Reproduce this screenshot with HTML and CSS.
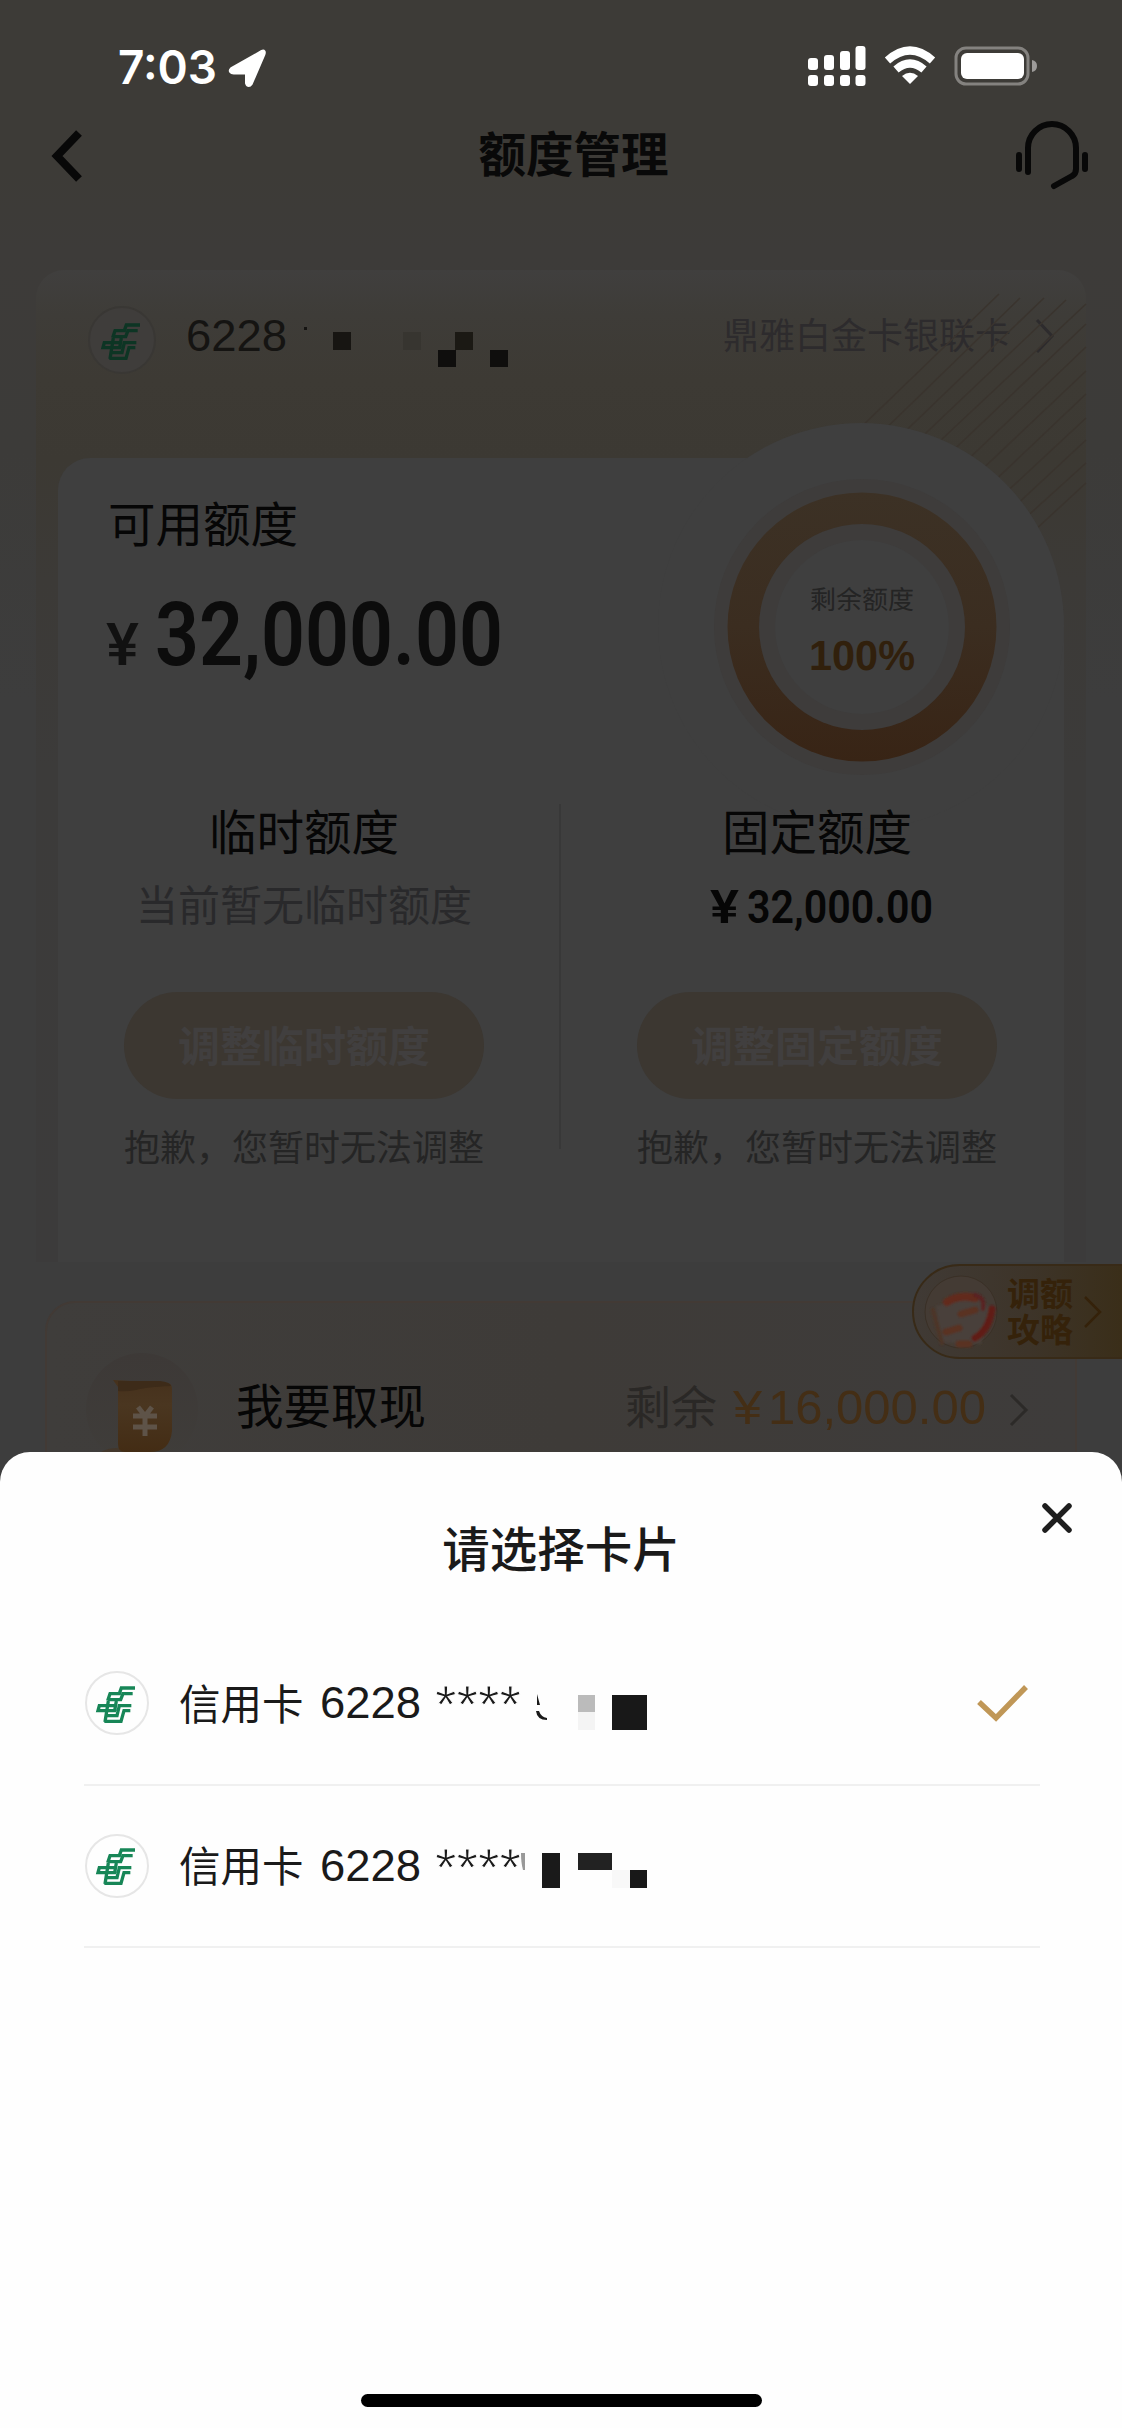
FILE: index.html
```html
<!DOCTYPE html>
<html lang="zh-CN">
<head>
<meta charset="utf-8">
<title>额度管理</title>
<link rel="stylesheet" href="styles.css">
</head>
<body>
<svg class="defs" width="0" height="0" aria-hidden="true">
  <symbol id="bank" viewBox="0 0 225 225">
    <g fill="none" stroke="currentColor" stroke-width="10" transform="translate(5 -2)">
      <path d="M160 68H119L113 85H82M153 85H124L117 103H80M86 82L78 106"/>
      <path d="M105 121H53L49 136H103M80 107L70 170M149 121H113L106 151H76M146 136H127L118 168H68M104 107L99 136"/>
    </g>
  </symbol>
</svg>
<main class="phone">
  <header class="status">
    <svg width="1122" height="100" viewBox="0 0 1122 100">
      <text class="clock" x="118" y="84" textLength="99" lengthAdjust="spacingAndGlyphs">7:03</text>
      <path class="white" stroke="#fff" stroke-width="5" stroke-linejoin="round" d="M232 69.500L262 52.500Q264 51 263 54L250.500 83Q248.500 86 247.500 83V72H234Q230 71.500 232 69.500Z"/>
      <g class="white">
        <rect x="808" y="58" width="10" height="12" rx="3"/><rect x="824" y="55" width="10" height="15" rx="3"/><rect x="840" y="51" width="10" height="19" rx="3"/><rect x="855.500" y="46" width="10" height="24" rx="3"/>
        <rect x="808" y="75" width="10" height="11" rx="3"/><rect x="824" y="75" width="10" height="11" rx="3"/><rect x="840" y="75" width="10" height="11" rx="3"/><rect x="855.500" y="75" width="10" height="11" rx="3"/>
        <path d="M910 84L902 76Q910 69.500 918 76Z"/>
      </g>
      <path class="wifi" d="M887.500 60.500Q910 40.500 932.500 60.500M896 69.500Q910 57.500 924 69.500"/>
      <rect x="956" y="48" width="72" height="36" rx="10" fill="none" stroke="#84827f" stroke-width="3"/>
      <rect x="961" y="53" width="63" height="26" rx="6" fill="#fff"/>
      <path d="M1032 60Q1037 61 1037 66T1032 72Z" fill="#9d9b99"/>
    </svg>
  </header>
  <nav class="nav">
    <svg class="back" width="36" height="54" viewBox="0 0 36 54"><path d="M31 4L9 27L31 50"/></svg>
    <h1>额度管理</h1>
    <svg class="service" width="76" height="72" viewBox="0 0 76 72"><path d="M15 52V28A24 24 0 0 1 63 28V49Q63 54 59 56L41 66M6 35V49M72 35V49"/></svg>
  </nav>

  <section class="outer">
    <svg class="lines" width="232" height="270" viewBox="0 0 232 270">
      <path d="M0 164L145 24M18 172L166 28M36 176L190 28M53 181L212 30M70 186L232 34M87 192L232 54M104 199L232 77M119 208L232 101M132 219L232 124M145 229L232 148M157 240L232 170M168 251L232 193M180 261L232 213"/>
    </svg>
    <div class="card-head">
      <span class="logo dim"><svg width="75" height="75"><use href="#bank"/></svg></span>
      <svg class="number" width="330" height="66" viewBox="0 0 330 66">
        <text class="digits" x="-2" y="45" textLength="101" lengthAdjust="spacingAndGlyphs">6228</text>
        <rect x="116" y="21" width="3" height="3"/>
        <rect x="145" y="26" width="18" height="18" fill="#171512"/><rect x="215" y="26" width="18" height="18" fill="#373530"/><rect x="267" y="26" width="18" height="18" fill="#1b1914"/><rect x="250" y="44" width="18" height="17" fill="#0f0e0d"/><rect x="302" y="44" width="18" height="17" fill="#0f0e0d"/>
      </svg>
      <span class="card-name">鼎雅白金卡银联卡</span>
      <svg class="chev" width="20" height="36" viewBox="0 0 20 36"><path d="M2 2L17 18L2 34"/></svg>
    </div>
    <div class="inner">
      <div class="bump"></div>
      <div class="available">
        <div>
          <h2>可用额度</h2>
          <svg class="amount" width="410" height="90" viewBox="0 0 410 90">
            <text class="yen" x="-1" y="75" textLength="33" lengthAdjust="spacingAndGlyphs">¥</text>
            <text class="big" x="48" y="75" textLength="348" lengthAdjust="spacingAndGlyphs">32,000.00</text>
          </svg>
        </div>
        <svg class="ring" width="298" height="298" viewBox="-149 -149 298 298">
          <defs><linearGradient id="gold" x1="0" y1="0" x2="0" y2="1"><stop offset="0" stop-color="#3c3125"/><stop offset=".5" stop-color="#3b2d20"/><stop offset="1" stop-color="#382415"/></linearGradient></defs>
          <circle r="148" fill="#3e3c3b"/>
          <circle r="134.500" fill="url(#gold)"/>
          <circle r="103" fill="#3e3c3b"/>
          <circle r="87" fill="#3f3f3f"/>
          <text class="ring-label" y="-18">剩余额度</text>
          <text class="ring-value" x="-53" y="43" textLength="106" lengthAdjust="spacingAndGlyphs">100%</text>
        </svg>
      </div>
      <div class="limits">
        <div class="limit">
          <h2>临时额度</h2>
          <p class="none">当前暂无临时额度</p>
          <button>调整临时额度</button>
          <p class="sorry">抱歉，您暂时无法调整</p>
        </div>
        <div class="limit">
          <h2>固定额度</h2>
          <svg class="fixed" width="230" height="58" viewBox="0 0 230 58">
            <text class="mid" x="8" y="46" textLength="29" lengthAdjust="spacingAndGlyphs">¥</text>
            <text class="mid" x="45" y="46" textLength="186" lengthAdjust="spacingAndGlyphs">32,000.00</text>
          </svg>
          <button>调整固定额度</button>
          <p class="sorry">抱歉，您暂时无法调整</p>
        </div>
      </div>
    </div>
  </section>

  <section class="cash">
    <svg class="wallet" width="112" height="112" viewBox="0 0 112 112">
      <defs><linearGradient id="purse" x1="0" y1="0" x2="0" y2="1"><stop offset="0" stop-color="#46311c"/><stop offset=".35" stop-color="#4a3620"/><stop offset="1" stop-color="#432c14"/></linearGradient>
      <linearGradient id="halo" x1="0" y1="0" x2="0" y2="1"><stop offset="0" stop-color="#3d3937"/><stop offset="1" stop-color="#3f3d3a"/></linearGradient></defs>
      <circle cx="56" cy="56" r="56" fill="url(#halo)"/>
      <ellipse cx="30" cy="104" rx="18" ry="9" fill="#43372b"/>
      <path d="M27 27L81 30Q86 30 86 36V78Q84 99 64 99H39Q32 99 32 91V34Z" fill="url(#purse)"/>
      <path d="M32 28H74Q84 29 85 33Q60 34 50 37Q40 39 32 38Z" fill="#3d2b19"/>
      <path d="M52 54L59 63L66 54M47 63H71M47 74H71M59 62V83" fill="none" stroke="#5e5348" stroke-width="5"/>
    </svg>
    <h2>我要取现</h2>
    <span class="left">剩余</span>
    <svg class="cash-amount" width="262" height="60" viewBox="0 0 262 60">
      <text x="1" y="47" textLength="29" lengthAdjust="spacingAndGlyphs">¥</text>
      <text x="36" y="47" textLength="218" lengthAdjust="spacingAndGlyphs">16,000.00</text>
    </svg>
    <svg class="chev small" width="20" height="34" viewBox="0 0 20 34"><path d="M2 2L17 17L2 32"/></svg>
  </section>

  <aside class="guide">
    <svg width="76" height="76" viewBox="-38 -38 76 76">
      <defs><filter id="soft"><feGaussianBlur stdDeviation="1"/></filter></defs>
      <circle r="36" fill="#443b34" stroke="#3a3026"/>
      <g filter="url(#soft)" fill="none" stroke-linecap="round">
        <path d="M-25 -6L-20 30L20 32L28 -4L18 -16L-18 -8Z" fill="#48403b"/>
        <path d="M-14 -10Q-2 -18 14 -14" stroke="#62291a" stroke-width="8"/>
        <path d="M14 -17Q24 -15 22 -3" stroke="#5a2020" stroke-width="4"/>
        <path d="M31 -3Q28 18 14 26" stroke="#601c12" stroke-width="7"/>
        <path d="M0 2L14 -2M-15 20L-2 16M-2 32H8" stroke="#5a3020" stroke-width="7"/>
        <path d="M-28 -2L-19 31" stroke="#4e3527" stroke-width="4"/>
      </g>
    </svg>
    <span>调额<br>攻略</span>
    <svg class="chev" width="20" height="34" viewBox="0 0 20 34"><path d="M2 2L17 17L2 32"/></svg>
  </aside>

  <section class="sheet">
    <h2>请选择卡片</h2>
    <svg class="close" width="34" height="34" viewBox="0 0 34 34"><path d="M5 5L29 29M29 5L5 29"/></svg>
    <ul>
      <li>
        <span class="logo"><svg width="75" height="75"><use href="#bank"/></svg></span>
        <span class="kind">信用卡</span>
        <svg class="number" width="340" height="66" viewBox="0 0 340 66">
          <text class="digits" x="-1" y="48" textLength="101" lengthAdjust="spacingAndGlyphs">6228</text>
          <text class="stars" x="114" y="53" textLength="86" lengthAdjust="spacingAndGlyphs">****</text>
          <path d="M216 24V35L219 35ZM215 41H218Q220 47 226 48V50Q216 50 215 41Z"/>
          <rect x="257" y="25" width="17" height="17" fill="#bbb"/><rect x="257" y="42" width="17" height="18" fill="#f4f4f4"/><rect x="291" y="25" width="35" height="35" fill="#181818"/>
        </svg>
        <svg class="check" width="56" height="42" viewBox="0 0 56 42"><path d="M4 20L21 36L51 5"/></svg>
      </li>
      <li>
        <span class="logo"><svg width="75" height="75"><use href="#bank"/></svg></span>
        <span class="kind">信用卡</span>
        <svg class="number" width="340" height="66" viewBox="0 0 340 66">
          <text class="digits" x="-1" y="48" textLength="101" lengthAdjust="spacingAndGlyphs">6228</text>
          <text class="stars" x="114" y="53" textLength="86" lengthAdjust="spacingAndGlyphs">****</text>
          <path d="M200 20H204V37H202Q200 30 200 20Z" fill="#999"/>
          <rect x="221" y="20" width="18" height="35"/><rect x="257" y="20" width="34" height="17" fill="#222"/><rect x="291" y="37" width="18" height="18" fill="#f8f8f8"/><rect x="309" y="37" width="17" height="18" fill="#181818"/>
        </svg>
      </li>
    </ul>
    <div class="home"></div>
  </section>
</main>
</body>
</html>
```
FILE: styles.css
```css
* { box-sizing: border-box; margin: 0; padding: 0; }
body { font-family: "Liberation Sans", "Noto Sans CJK SC", sans-serif; }
svg { display: block; flex: none; overflow: visible; }
.defs { position: absolute; }
.phone {
  position: relative; width: 1122px; height: 2428px; overflow: hidden;
  background: linear-gradient(#3d3b37 0, #3d3b37 170px, #3d3b39 250px, #3c3b39 450px, #3d3d3d 700px);
}
h1, h2 { font-size: 47.500px; line-height: 60px; white-space: nowrap; }
h2 { font-weight: 400; color: #060606; }

.status { height: 100px; }
.clock { font: 600 47px Inter, sans-serif; fill: #fff; }
.white { fill: #fff; }
.wifi { fill: none; stroke: #fff; stroke-width: 8; }

.nav { height: 170px; display: flex; justify-content: space-between; padding: 20px 33px 0 48px; }
.nav h1 { font-weight: 700; color: #090909; padding: 6px 0 0 50px; line-height: 60px; }
.back { margin-top: 9px; fill: none; stroke: #080808; stroke-width: 8; }
.service { fill: none; stroke: #080808; stroke-width: 6; stroke-linecap: round; stroke-linejoin: round; }

.outer {
  position: relative; margin: 0 36px; height: 992px; border-radius: 28px 28px 0 0; padding: 0 22px;
  background: linear-gradient(#403f3e 0, #3e3c38 45px, #3d3a34 110px, #3c3933 190px, #3c3a37 310px, #3c3b3a 500px, #3c3b3b 988px);
}
.lines { position: absolute; right: 0; top: 0; fill: none; stroke: #3a342e; stroke-width: 1.500; }
.card-head { display: flex; height: 188px; align-items: flex-start; padding: 36px 10px 0 30px; }
.logo {
  width: 64px; height: 64px; border: 2px solid #e6e6e6; border-radius: 50%; color: #178657;
  display: flex; align-items: center; justify-content: center; flex: none;
}
.logo svg { width: 75px; height: 75px; }
.logo.dim { width: 68px; height: 68px; border-color: #393734; background: #3f3d3b; color: #0d3524; }
.card-head .number { margin-left: 32px; fill: #151412; }
.digits { font: 44px "Liberation Sans", sans-serif; }
.card-name { margin: 4px 0 0 205px; width: 288px; font-size: 36px; line-height: 54px; color: #2d2b2d; white-space: nowrap; }
.chev { fill: none; stroke: #2d2b2d; stroke-width: 3; }
.card-head .chev { margin: 12px 0 0 24px; }

.inner { position: relative; height: 804px; background: #3f3f3f; border-radius: 32px 203px 0 0 / 32px 168px 0 0; }
.bump { position: absolute; right: 0; top: -35px; width: 406px; height: 406px; border-radius: 50%; background: #3f3f3f; }
.available { position: relative; display: flex; justify-content: space-between; height: 346px; padding: 38px 53px 0 49px; }
.available h2 { padding-left: 1px; }
.amount { margin-top: 34px; }
.yen { font: 500 59px Roboto, sans-serif; fill: #111; }
.big { font: 600 89px Roboto, sans-serif; fill: #0c0c0c; }
.ring { margin-top: -18px; }
.ring text { text-rendering: geometricPrecision; }
.ring-label { font: 26px "Noto Sans CJK SC", sans-serif; text-anchor: middle; fill: #242424; }
.ring-value { font: 700 42px "Liberation Sans", sans-serif; fill: #31200c; }

.limits { position: relative; display: flex; margin-left: -9px; height: 345px; width: 1024px; }
.limit { width: 512px; display: flex; flex-direction: column; align-items: center; }
.limit:first-child { border-right: 2px solid #383838; }
.none { font-size: 42px; line-height: 58px; height: 58px; margin-top: 14px; color: #29292b; }
.limits h2 { line-height: 60px; }
.fixed { margin-top: 12px; height: 60px; }
.mid { font: 600 46px Roboto, sans-serif; fill: #060606; }
.limit button {
  width: 360px; height: 107px; margin-top: 56px; border: 0; border-radius: 54px; padding-bottom: 4px;
  background: #3c3731; color: #413f3f; font: 700 42px "Noto Sans CJK SC", sans-serif; line-height: 103px; flex: none;
}
.sorry { font-size: 36px; line-height: 52px; margin-top: 24px; color: #252525; white-space: nowrap; flex: none; }

.cash {
  height: 240px; margin: 39px 45px 0; border: 2px solid #423a35; border-radius: 30px; padding: 50px 47px 0 39px;
  background: linear-gradient(90deg, #3f3d3b, #3e3b38 50%, #3e3c3b); display: flex;
}
.cash h2 { margin: 25px 0 0 38px; width: 190px; }
.left { margin: 25px 0 0 199px; font-size: 46px; line-height: 60px; width: 92px; color: #2a2826; white-space: nowrap; }
.cash-amount { margin: 24px 0 0 15px; font: 49px "Liberation Sans", sans-serif; fill: #442e15; }
.cash .chev { margin: 40px 0 0 15px; stroke: #2c2a28; }

.guide {
  position: absolute; left: 912px; top: 1264px; width: 212px; height: 95px; border: 2px solid #382a17;
  border-radius: 48px 0 0 48px; background: linear-gradient(90deg, #403a35, #3d3429 55%, #3a2e19);
  display: flex; align-items: center; padding-left: 9px; color: #35220a;
}
.guide span { margin: 3px 0 0 8px; font-size: 33px; line-height: 36px; font-weight: 700; }
.guide .chev { margin-left: 10px; stroke: #35220a; stroke-width: 2.500; }

.sheet { position: absolute; left: 0; top: 1452px; width: 1122px; height: 976px; background: #fefefe; border-radius: 30px 30px 0 0; }
.sheet h2 { padding-top: 69px; text-align: center; font-weight: 500; color: #1a1a1a; height: 171px; }
.close { position: absolute; left: 1040px; top: 49px; fill: none; stroke: #1e1e1e; stroke-width: 5.500; stroke-linecap: round; }
ul { list-style: none; margin: 0 82px 0 84px; }
li { height: 162.500px; border-bottom: 2px solid #f0f0f0; display: flex; align-items: center; padding-left: 1px; }
.kind { margin: 5px 0 0 30px; width: 142px; font-size: 41.500px; line-height: 60px; color: #1a1a1a; }
li .number { fill: #1a1a1a; }
.stars { font: 54px "Liberation Sans", sans-serif; stroke: #fefefe; stroke-width: 1; }
.check { margin-left: 314px; fill: none; stroke: #c09757; stroke-width: 5.500; }
.home { position: absolute; left: 361px; top: 942px; width: 401px; height: 13px; border-radius: 7px; background: #000; }
```
